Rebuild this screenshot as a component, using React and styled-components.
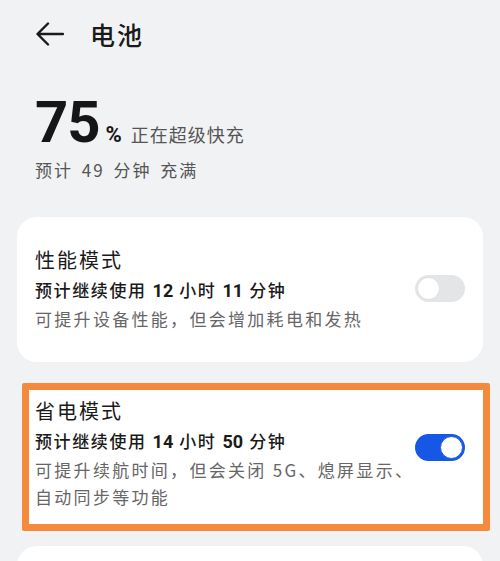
import React from "react";
import styled, { createGlobalStyle } from "styled-components";

const GlobalStyle = createGlobalStyle`
  html, body {
    margin: 0;
    background: #f1f2f4;
  }
  body {
    font-family: "Noto Sans CJK SC", "Noto Sans", sans-serif;
    color: #1a1a1a;
  }
`;

const Page = styled.div({
    width: "500px",
    height: "561px",
    overflow: "hidden",
    padding: "0 17px",
    boxSizing: "border-box",
});

const Header = styled.div({
    height: "68px",
    display: "flex",
    alignItems: "center",
    gap: "26px",
    paddingLeft: "19px",
});

const Title = styled.h1({
    margin: 0,
    fontSize: "25px",
    fontWeight: 500,
    letterSpacing: "2px",
    color: "#1a1a1a",
});

const Hero = styled.div({
    paddingLeft: "18px",
    marginTop: "24px",
});

const LevelRow = styled.div({
    display: "flex",
    alignItems: "baseline",
    height: "60px",
});

const Level = styled.span({
    fontFamily: "Roboto, sans-serif",
    fontWeight: 700,
    fontSize: "58px",
    lineHeight: "60px",
    letterSpacing: "-1px",
    color: "#161616",
});

const Percent = styled.span({
    fontFamily: "Roboto, sans-serif",
    fontWeight: 700,
    fontSize: "22px",
    marginLeft: "6px",
    color: "#161616",
});

const Status = styled.span({
    fontSize: "18px",
    marginLeft: "9px",
    letterSpacing: "1px",
    color: "#555",
});

const Eta = styled.div({
    marginTop: "6px",
    fontSize: "17px",
    lineHeight: "24px",
    letterSpacing: "2px",
    wordSpacing: "3px",
    color: "#555",
});

const Card = styled.div`
  display: flex;
  align-items: center;
  background: #fff;
  border-radius: ${(p) => (p.$marked ? "2px" : "20px")};
  border: ${(p) => (p.$marked ? "7px solid #f58a3c" : "none")};
  padding: ${(p) => (p.$marked ? "6px 18px 14px 6px" : "28px 18px 30px 18px")};
  margin: ${(p) => (p.$marked ? "0 -7px 0 5px" : "0")};
`;

const Cards = styled.div({
    display: "flex",
    flexDirection: "column",
    marginTop: "35px",
});

const Gap = styled.div`
  height: ${(p) => p.$h}px;
`;

const Text = styled.div({
    flex: 1,
    minWidth: 0,
});

const ModeName = styled.div({
    fontSize: "20px",
    lineHeight: "30px",
    letterSpacing: "2px",
    color: "#1a1a1a",
});

const Estimate = styled.div({
    fontSize: "17px",
    lineHeight: "29px",
    fontWeight: 500,
    letterSpacing: "1.6px",
    color: "#1a1a1a",
    "& b": {
        fontFamily: "Roboto, sans-serif",
        fontWeight: 700,
        fontSize: "18px",
        letterSpacing: "0",
        margin: "0 6px",
    },
});

const Desc = styled.div({
    fontSize: "17px",
    lineHeight: "27px",
    letterSpacing: "2.3px",
    color: "#666",
});

const Track = styled.div`
  flex: none;
  position: relative;
  width: 50px;
  height: 27px;
  border-radius: 14px;
  box-sizing: border-box;
  background: ${(p) => (p.$on ? "#1757e6" : "#e4e5e7")};
  margin-bottom: ${(p) => (p.$on ? "12px" : "0")};
`;

const Knob = styled.div`
  position: absolute;
  top: 2px;
  left: ${(p) => (p.$on ? "25px" : "2px")};
  width: 23px;
  height: 23px;
  border-radius: 50%;
  background: #fff;
  box-sizing: border-box;
  border: 1px solid ${(p) => (p.$on ? "#1757e6" : "#e0e0e2")};
`;

const Toggle = ({ on }) => (
    <Track $on={on}>
        <Knob $on={on} />
    </Track>
);

const BackArrow = () => (
    <svg width="28" height="24" viewBox="0 0 28 24" fill="none">
        <path d="M27 12H2M12 1.5L1.5 12L12 22.5" stroke="#1a1a1a" strokeWidth="2.4" strokeLinecap="round" strokeLinejoin="round" />
    </svg>
);

const App = () => {
    return (
        <>
            <GlobalStyle />
            <Page>
                <Header>
                    <BackArrow />
                    <Title>电池</Title>
                </Header>
                <Hero>
                    <LevelRow>
                        <Level>75</Level>
                        <Percent>%</Percent>
                        <Status>正在超级快充</Status>
                    </LevelRow>
                    <Eta>预计 49 分钟 充满</Eta>
                </Hero>
                <Cards>
                    <Card>
                        <Text>
                            <ModeName>性能模式</ModeName>
                            <Estimate>预计继续使用<b>12</b>小时<b>11</b>分钟</Estimate>
                            <Desc>可提升设备性能，但会增加耗电和发热</Desc>
                        </Text>
                        <Toggle on={false} />
                    </Card>
                    <Gap $h={21} />
                    <Card $marked>
                        <Text>
                            <ModeName>省电模式</ModeName>
                            <Estimate>预计继续使用<b>14</b>小时<b>50</b>分钟</Estimate>
                            <Desc>可提升续航时间，但会关闭 5G、熄屏显示、<br />自动同步等功能</Desc>
                        </Text>
                        <Toggle on />
                    </Card>
                    <Gap $h={15} />
                    <Card>
                        <Text>
                            <ModeName>&nbsp;</ModeName>
                        </Text>
                    </Card>
                </Cards>
            </Page>
        </>
    );
};

export default App;
